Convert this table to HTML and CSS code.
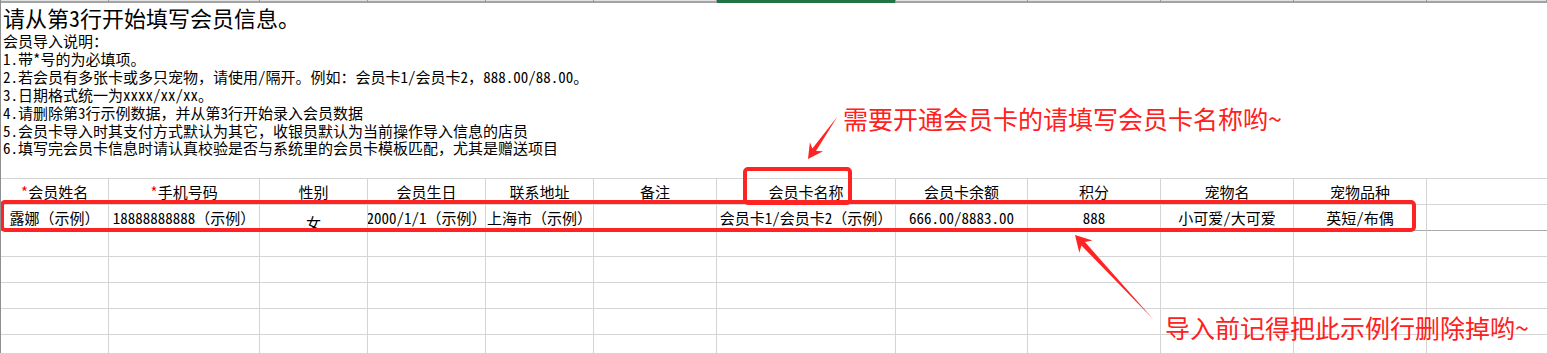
FILE: index.html
```html
<!DOCTYPE html>
<html lang="zh-CN">
<head>
<meta charset="utf-8">
<title>会员导入模板</title>
<link rel="stylesheet" href="styles.css">
</head>
<body>
<div class="sheet">
  <div class="colhead">
    <span></span><span></span><span></span><span></span><span></span><span></span>
    <span class="sel"></span><span></span><span></span><span></span><span></span><span></span>
  </div>
  <div class="merged">
    <div class="title">请从第<span class="hw">3</span>行开始填写会员信息。</div>
    <div class="notes">
      <p>会员导入说明：</p>
      <p><span class="hw">1.</span>带<span class="hw">*</span>号的为必填项。</p>
      <p><span class="hw">2.</span>若会员有多张卡或多只宠物，请使用<span class="hw">/</span>隔开。例如：会员卡<span class="hw">1/</span>会员卡<span class="hw">2</span>，<span class="hw">888.00/88.00</span>。</p>
      <p><span class="hw">3.</span>日期格式统一为<span class="hw">xxxx/xx/xx</span>。</p>
      <p><span class="hw">4.</span>请删除第<span class="hw">3</span>行示例数据，并从第<span class="hw">3</span>行开始录入会员数据</p>
      <p><span class="hw">5.</span>会员卡导入时其支付方式默认为其它，收银员默认为当前操作导入信息的店员</p>
      <p><span class="hw">6.</span>填写完会员卡信息时请认真校验是否与系统里的会员卡模板匹配，尤其是赠送项目</p>
    </div>
  </div>
  <div class="grid">
    <div class="cell"><span class="req hw">*</span>会员姓名</div>
    <div class="cell"><span class="req hw">*</span>手机号码</div>
    <div class="cell">性别</div>
    <div class="cell">会员生日</div>
    <div class="cell">联系地址</div>
    <div class="cell">备注</div>
    <div class="cell">会员卡名称</div>
    <div class="cell">会员卡余额</div>
    <div class="cell">积分</div>
    <div class="cell">宠物名</div>
    <div class="cell">宠物品种</div>
    <div class="cell last"></div>

    <div class="cell data">露娜（示例）</div>
    <div class="cell data"><span class="hw">18888888888</span>（示例）</div>
    <div class="cell data low">女</div>
    <div class="cell data"><span class="hw">2000/1/1</span>（示例）</div>
    <div class="cell data">上海市（示例）</div>
    <div class="cell data"></div>
    <div class="cell data">会员卡<span class="hw">1/</span>会员卡<span class="hw">2</span>（示例）</div>
    <div class="cell data"><span class="hw">666.00/8883.00</span></div>
    <div class="cell data"><span class="hw">888</span></div>
    <div class="cell data">小可爱<span class="hw">/</span>大可爱</div>
    <div class="cell data">英短<span class="hw">/</span>布偶</div>
    <div class="cell data last"></div>

    <div class="cell"></div><div class="cell"></div><div class="cell"></div><div class="cell"></div><div class="cell"></div><div class="cell"></div><div class="cell"></div><div class="cell"></div><div class="cell"></div><div class="cell"></div><div class="cell"></div><div class="cell last"></div>
    <div class="cell"></div><div class="cell"></div><div class="cell"></div><div class="cell"></div><div class="cell"></div><div class="cell"></div><div class="cell"></div><div class="cell"></div><div class="cell"></div><div class="cell"></div><div class="cell"></div><div class="cell last"></div>
    <div class="cell"></div><div class="cell"></div><div class="cell"></div><div class="cell"></div><div class="cell"></div><div class="cell"></div><div class="cell"></div><div class="cell"></div><div class="cell"></div><div class="cell"></div><div class="cell"></div><div class="cell last"></div>
    <div class="cell"></div><div class="cell"></div><div class="cell"></div><div class="cell"></div><div class="cell"></div><div class="cell"></div><div class="cell"></div><div class="cell"></div><div class="cell"></div><div class="cell"></div><div class="cell"></div><div class="cell last"></div>
    <div class="cell"></div><div class="cell"></div><div class="cell"></div><div class="cell"></div><div class="cell"></div><div class="cell"></div><div class="cell"></div><div class="cell"></div><div class="cell"></div><div class="cell"></div><div class="cell"></div><div class="cell last"></div>
  </div>

  <div class="box box-row"></div>
  <div class="box box-col"></div>
  <svg class="arrows" width="1547" height="353" viewBox="0 0 1547 353">
    <polygon points="808,159 823.1,151.2 816,151.1 837.5,116.5 812.4,148.6 809.9,142.2"/>
    <polygon points="1075,235 1092.5,240.6 1085,242.1 1153.5,319.5 1081.4,245.5 1079.3,252.8"/>
  </svg>
  <div class="note note1">需要开通会员卡的请填写会员卡名称哟~</div>
  <div class="note note2">导入前记得把此示例行删除掉哟~</div>
</div>
</body>
</html>
```

FILE: styles.css
```css
* {
  box-sizing: border-box;
}

html, body {
  margin: 0;
  padding: 0;
  background: #ffffff;
}

body {
  width: 1547px;
  height: 353px;
  overflow: hidden;
  font-family: "Noto Sans CJK SC", "Noto Sans", sans-serif;
  color: #000000;
}

.hw {
  font-feature-settings: "hwid" 1;
}

.sheet {
  position: relative;
  width: 1547px;
  height: 353px;
  border-left: 1px solid #8e8e8e;
  overflow: hidden;
}

.colhead {
  display: grid;
  grid-template-columns: 108px 151px 108px 118px 108px 123px 179px 132px 133px 133px 133px 1fr;
  height: 3px;
}

.colhead span {
  display: block;
  height: 3px;
  border-right: 1px solid #9a9a9a;
  background: linear-gradient(#e2e2e2 0 1px, #a4a4a4 1px);
}

.colhead span.sel {
  background: #217346;
}

.merged {
  height: 175px;
  padding: 0 0 0 2px;
}

.title {
  font-size: 22px;
  line-height: 29px;
  white-space: nowrap;
}

.notes p {
  margin: 0;
  font-size: 15px;
  line-height: 17.9px;
  white-space: nowrap;
}

.grid {
  display: grid;
  grid-template-columns: 108px 151px 108px 118px 108px 123px 179px 132px 133px 133px 133px 1fr;
  grid-auto-rows: 26px;
  border-top: 1px solid #d4d4d4;
}

.cell {
  display: flex;
  align-items: center;
  justify-content: center;
  height: 26px;
  border-right: 1px solid #d4d4d4;
  border-bottom: 1px solid #d4d4d4;
  font-size: 15px;
  line-height: 25px;
  white-space: nowrap;
  overflow: hidden;
}

.cell.last {
  border-right: none;
}

.cell.data {
  border-bottom-color: #a9a9a9;
}

.cell.low {
  align-items: flex-start;
  padding-top: 5px;
}

.req {
  color: #ff0000;
}

.box {
  position: absolute;
  border: 4px solid #ff2424;
  border-radius: 5px;
}

.box-row {
  left: -1px;
  top: 200px;
  width: 1416px;
  height: 32px;
}

.box-col {
  left: 742px;
  top: 167px;
  width: 109px;
  height: 38px;
}

.arrows {
  position: absolute;
  left: -1px;
  top: 0;
  fill: #ff2424;
}

.note {
  position: absolute;
  font-size: 25px;
  line-height: 25px;
  color: #ff2020;
  white-space: nowrap;
}

.note1 {
  left: 842px;
  top: 106px;
}

.note2 {
  left: 1164px;
  top: 315px;
}
```
